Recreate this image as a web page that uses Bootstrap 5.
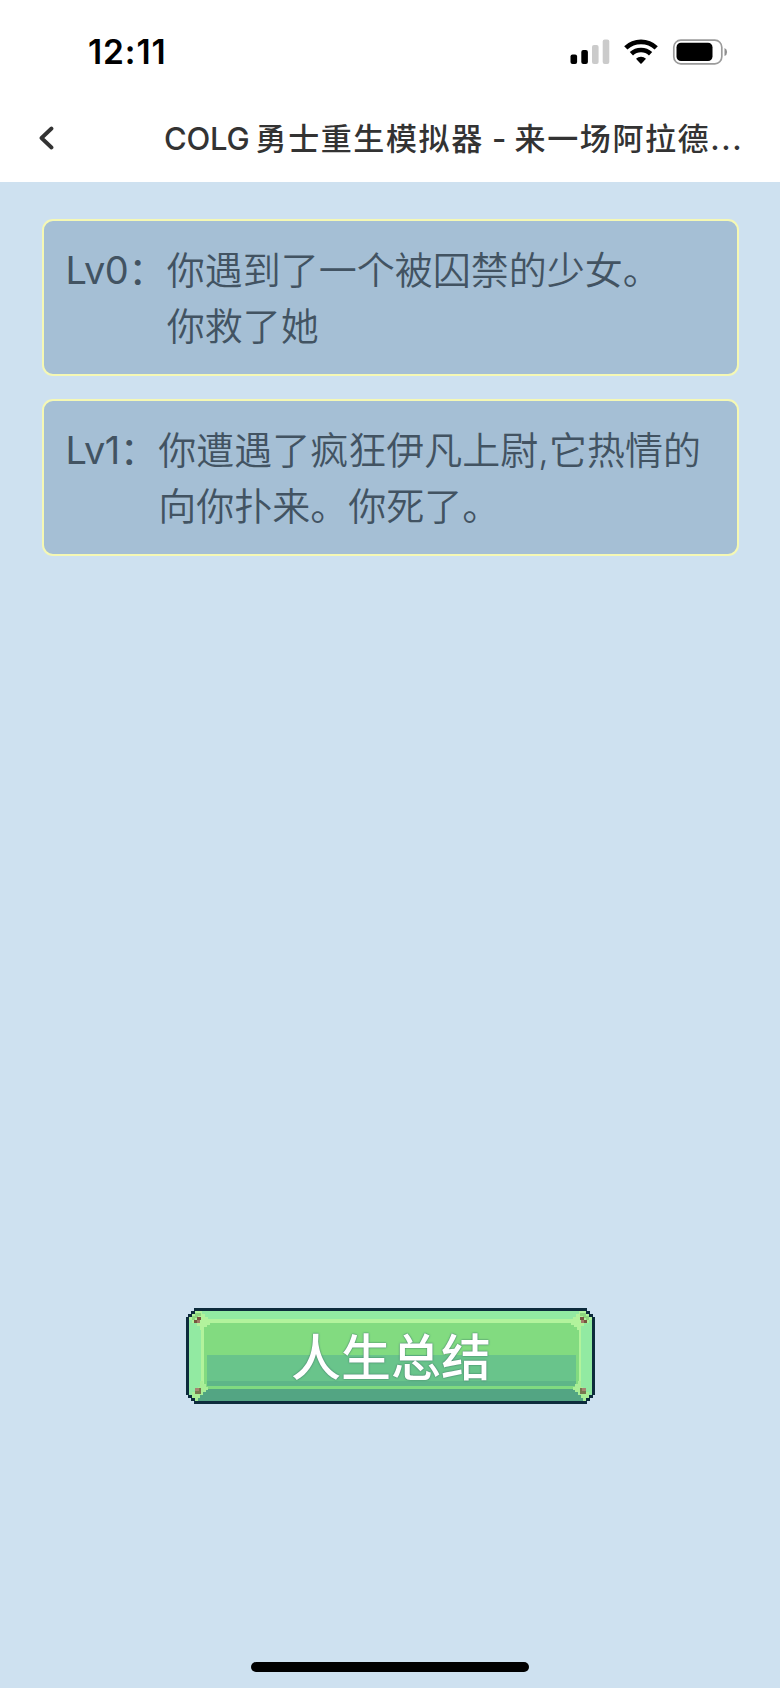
<!DOCTYPE html>
<html lang="zh-CN">
  <head>
    <meta charset="UTF-8" />
    <meta name="viewport" content="width=device-width, initial-scale=1.0" />
    <title>COLG勇士重生模拟器</title>
    <link
      href="https://cdn.jsdelivr.net/npm/bootstrap@5.3.0/dist/css/bootstrap.min.css"
      rel="stylesheet"
    />
    <style>
      body {
        height: 1688px;
        background: #cee1f0;
        font-family: Inter, "Noto Sans CJK SC", sans-serif;
        overflow: hidden;
      }
      .status-bar {
        height: 104px;
        padding: 0 52px 0 88px;
      }
      .clock {
        font-size: 33.5px;
        font-weight: 600;
        color: #000;
        letter-spacing: 0.9px;
      }
      .title-bar {
        height: 78px;
        padding: 0 38px 8px;
      }
      .page-title {
        margin-left: 108px;
        font-size: 31px;
        font-weight: 500;
        letter-spacing: 1.6px;
        color: #333;
        white-space: nowrap;
      }
      .page-title .brand {
        margin-right: 6px;
        font-size: 31px;
        letter-spacing: -0.2px;
      }
      .page-title .dash {
        letter-spacing: 0;
      }
      .event-list {
        padding: 36.5px 41.5px 0;
        gap: 22.5px;
      }
      .event-item {
        height: 157.5px;
        padding: 21px 22px 0;
        background: #a5bfd5;
        border: 2px solid #f5f8b4;
        border-radius: 11px;
        font-size: 38px;
        font-weight: 350;
        line-height: 56px;
        color: #425362;
      }
      .event-item .level {
        font-weight: 400;
        letter-spacing: -0.5px;
      }
      .event-item p {
        margin-left: 1px;
        white-space: nowrap;
      }
      .btn-summary {
        width: 409px;
        height: 96px;
        margin-bottom: 284px;
        font-size: 50px;
        font-weight: 500;
        line-height: 96px;
        color: #fff;
        text-shadow: 0 0 2px #3f7d68, 0 0 1px #3f7d68;
      }
      .btn-summary:hover {
        color: #fff;
      }
      .btn-summary .caption-text {
        display: block;
        padding: 3px 0 0 2px;
        line-height: 94px;
      }
      .home-bar {
        width: 278px;
        height: 10px;
        bottom: 16px;
        left: 251px;
      }
    </style>
  </head>
  <body class="d-flex flex-column position-relative">
    <header class="bg-white">
      <div class="status-bar d-flex align-items-center justify-content-between">
        <span class="clock">12:11</span>
        <svg width="158" height="28" viewBox="0 0 158 28">
          <rect x="0.5" y="16.5" width="6.6" height="9.5" rx="2" />
          <rect x="11.3" y="12" width="6.6" height="14" rx="2" />
          <rect x="22" y="7" width="6.6" height="19" rx="2" fill="#cbcbcb" />
          <rect x="32.7" y="1.5" width="6.6" height="24.5" rx="2" fill="#cbcbcb" />
          <g fill="none" stroke="#000" stroke-width="4.7">
            <path d="M55.8 9.9a22 22 0 0 1 30.4 0" />
            <path d="M61.4 15.8a14 14 0 0 1 19.2 0" />
          </g>
          <path d="M66 20.7a7.5 7.5 0 0 1 10 0l-4.4 4.7q-.6.6-1.2 0z" />
          <rect x="103.8" y="2.2" width="48" height="23.6" rx="7" fill="none" stroke="#9b9b9b" stroke-width="1.7" />
          <rect x="106.5" y="4.8" width="36" height="18.2" rx="4.5" />
          <path d="M154.5 10v8q2.6-1 2.6-4t-2.6-4z" fill="#8f8f8f" />
        </svg>
      </div>
      <div class="title-bar d-flex align-items-center">
        <svg class="flex-shrink-0" width="18" height="26" viewBox="0 0 18 26">
          <path d="M13.5 2.5L3.5 12l10 9.5" fill="none" stroke="#333" stroke-width="3.8" stroke-linecap="round" stroke-linejoin="round" />
        </svg>
        <span class="page-title"><span class="brand">COLG</span>勇士重生模拟器<span class="dash"> - </span>来一场阿拉德...</span>
      </div>
    </header>

    <main class="event-list d-flex flex-column flex-grow-1">
      <div class="event-item d-flex">
        <span class="level">Lv0：</span>
        <p class="mb-0">你遇到了一个被囚禁的少女。<br />你救了她</p>
      </div>
      <div class="event-item d-flex">
        <span class="level">Lv1：</span>
        <p class="mb-0">你遭遇了疯狂伊凡上尉,它热情的<br />向你扑来。你死了。</p>
      </div>
    </main>

    <button class="btn btn-summary position-relative align-self-center p-0 border-0">
      <svg class="position-absolute top-0 start-0" width="409" height="96" viewBox="0 0 409 96" shape-rendering="crispEdges">
        <!-- frame -->
        <path d="M8 0H401V3H404V6H407V9H409V87H407V90H404V93H401V96H8V93H5V90H2V87H0V9H2V6H5V3H8z" fill="#0d2b3c" />
        <path d="M9 3H400V6H403V9H406V87H403V90H400V93H9V90H6V87H3V9H6V6H9z" fill="#92eaa2" />
        <path d="M17 81H392L403 90H400V93H9V90H6z" fill="#53a583" />
        <!-- panel -->
        <path d="M15 11H395V81H15z" fill="#b2f39c" />
        <path d="M18 15H393V81H18z" fill="#82db80" />
        <path d="M21 47H390V78H21z" fill="#69c48b" />
        <path d="M21 73H390V78H21z" fill="#5eb688" />
        <path d="M18 78H392V81H18z" fill="#80da80" />
        <!-- corner studs -->
        <g id="stud-top">
          <path d="M9 3H16V6H19V9H22V12H28V14H24V17H21V19H18V22H14V18H11V15H6V12H3V9H6V6H9z" fill="#b2f39c" />
          <path d="M9 5H15V8H12V10H9V12H6V8H9z" fill="#8fd67f" />
          <path d="M11 9H15V12H11zM8 12H14V15H8z" fill="#76563f" />
          <path d="M11 12H14V15H11z" fill="#a27967" />
        </g>
        <use href="#stud-top" transform="translate(409 0) scale(-1 1)" />
        <g id="stud-bottom">
          <path d="M14 73H17V76H20V79H22V82H20V84H17V87H14V90H12V93H9V90H6V87H6V84H9V81H12V79H14z" fill="#a9ee96" />
          <path d="M9 80H15V86H9z" fill="#78774f" />
          <path d="M9 80H13V83H9z" fill="#a68570" />
        </g>
        <use href="#stud-bottom" transform="translate(409 0) scale(-1 1)" />
      </svg>
      <span class="caption-text position-relative">人生总结</span>
    </button>

    <div class="home-bar position-absolute bg-black rounded-pill"></div>

    <script src="https://cdn.jsdelivr.net/npm/bootstrap@5.3.0/dist/js/bootstrap.bundle.min.js"></script>
  </body>
</html>
